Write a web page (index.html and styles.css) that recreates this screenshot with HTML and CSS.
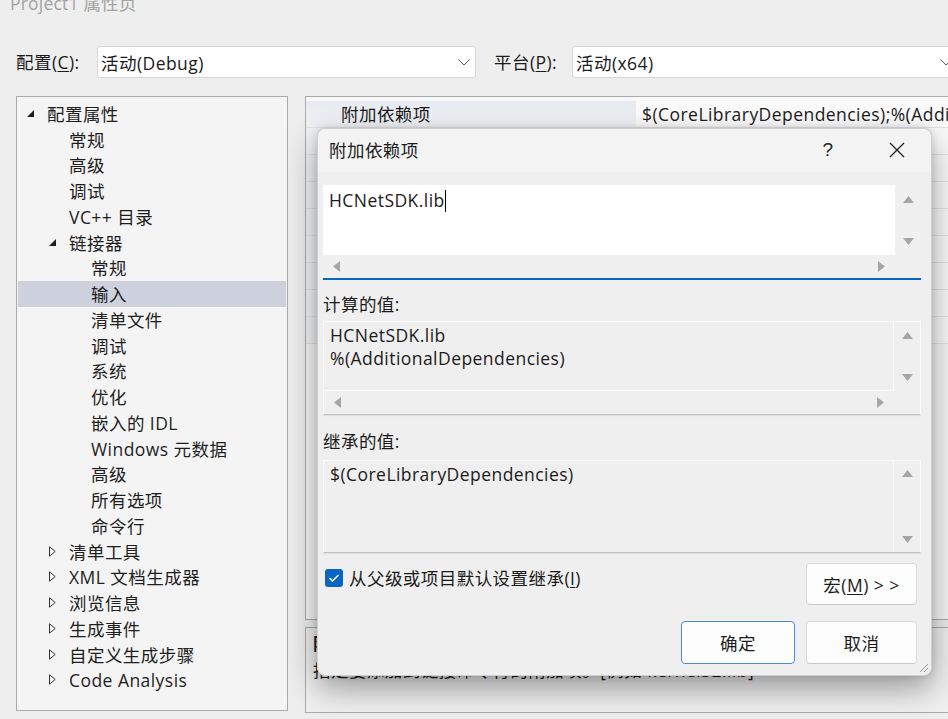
FILE: index.html
```html
<!DOCTYPE html>
<html lang="zh-CN">
<head>
<meta charset="utf-8">
<title>Project1 属性页</title>
<link rel="stylesheet" href="styles.css">
</head>
<body>
<div class="titlebar">Project1 属性页</div>

<div class="config-row">
  <span class="lbl lbl-config">配置(<u>C</u>):</span>
  <div class="combo combo-config">
    <span>活动(Debug)</span>
    <svg class="chev" width="12" height="7" viewBox="0 0 12 7"><path d="M0.5 0.5L6 6L11.5 0.5" fill="none" stroke="#555" stroke-width="1"/></svg>
  </div>
  <span class="lbl lbl-platform">平台(<u>P</u>):</span>
  <div class="combo combo-platform">
    <span>活动(x64)</span>
    <svg class="chev" width="12" height="7" viewBox="0 0 12 7"><path d="M0.5 0.5L6 6L11.5 0.5" fill="none" stroke="#555" stroke-width="1"/></svg>
  </div>
</div>

<div class="main">
  <div class="tree">
    <div class="node l0"><span class="exp"><svg width="7" height="7" viewBox="0 0 7 7"><path d="M7 0V7H0Z" fill="#1e1e1e"/></svg></span>配置属性</div>
    <div class="node l1"><span class="exp"></span>常规</div>
    <div class="node l1"><span class="exp"></span>高级</div>
    <div class="node l1"><span class="exp"></span>调试</div>
    <div class="node l1"><span class="exp"></span>VC++ 目录</div>
    <div class="node l1"><span class="exp"><svg width="7" height="7" viewBox="0 0 7 7"><path d="M7 0V7H0Z" fill="#1e1e1e"/></svg></span>链接器</div>
    <div class="node l2"><span class="exp"></span>常规</div>
    <div class="node l2 selected"><span class="exp"></span>输入</div>
    <div class="node l2"><span class="exp"></span>清单文件</div>
    <div class="node l2"><span class="exp"></span>调试</div>
    <div class="node l2"><span class="exp"></span>系统</div>
    <div class="node l2"><span class="exp"></span>优化</div>
    <div class="node l2"><span class="exp"></span>嵌入的 IDL</div>
    <div class="node l2"><span class="exp"></span>Windows 元数据</div>
    <div class="node l2"><span class="exp"></span>高级</div>
    <div class="node l2"><span class="exp"></span>所有选项</div>
    <div class="node l2"><span class="exp"></span>命令行</div>
    <div class="node l1"><span class="exp"><svg width="7" height="11" viewBox="0 0 7 11"><path d="M0.5 0.8L6.2 5.5L0.5 10.2Z" fill="none" stroke="#333" stroke-width="1"/></svg></span>清单工具</div>
    <div class="node l1"><span class="exp"><svg width="7" height="11" viewBox="0 0 7 11"><path d="M0.5 0.8L6.2 5.5L0.5 10.2Z" fill="none" stroke="#333" stroke-width="1"/></svg></span>XML 文档生成器</div>
    <div class="node l1"><span class="exp"><svg width="7" height="11" viewBox="0 0 7 11"><path d="M0.5 0.8L6.2 5.5L0.5 10.2Z" fill="none" stroke="#333" stroke-width="1"/></svg></span>浏览信息</div>
    <div class="node l1"><span class="exp"><svg width="7" height="11" viewBox="0 0 7 11"><path d="M0.5 0.8L6.2 5.5L0.5 10.2Z" fill="none" stroke="#333" stroke-width="1"/></svg></span>生成事件</div>
    <div class="node l1"><span class="exp"><svg width="7" height="11" viewBox="0 0 7 11"><path d="M0.5 0.8L6.2 5.5L0.5 10.2Z" fill="none" stroke="#333" stroke-width="1"/></svg></span>自定义生成步骤</div>
    <div class="node l1"><span class="exp"><svg width="7" height="11" viewBox="0 0 7 11"><path d="M0.5 0.8L6.2 5.5L0.5 10.2Z" fill="none" stroke="#333" stroke-width="1"/></svg></span>Code Analysis</div>
  </div>

  <div class="right">
    <div class="grid">
      <div class="prow sel"><div class="pname">附加依赖项</div><div class="pval">$(CoreLibraryDependencies);%(AdditionalDependencies)</div></div>
      <div class="prow"><div class="pname"></div><div class="pval"></div></div>
      <div class="prow"><div class="pname"></div><div class="pval"></div></div>
      <div class="prow"><div class="pname"></div><div class="pval"></div></div>
      <div class="prow"><div class="pname"></div><div class="pval"></div></div>
      <div class="prow"><div class="pname"></div><div class="pval"></div></div>
      <div class="prow"><div class="pname"></div><div class="pval"></div></div>
      <div class="prow"><div class="pname"></div><div class="pval"></div></div>
      <div class="prow"><div class="pname"></div><div class="pval"></div></div>
    </div>
    <div class="desc">
      <div class="desc-title">附加依赖项</div>
      <div class="desc-text">指定要添加到链接命令行的附加项。[例如 kernel32.lib]</div>
    </div>
  </div>
</div>

<div class="dialog">
  <div class="dlg-head">
    <span class="dlg-title">附加依赖项</span>
    <span class="dlg-btn dlg-help">?</span>
    <span class="dlg-btn dlg-close"><svg width="16" height="16" viewBox="0 0 16 16"><path d="M1 1L15 15M15 1L1 15" stroke="#222" stroke-width="1.3" fill="none"/></svg></span>
  </div>
  <div class="dlg-body">
    <div class="editbox">
      <div class="edit-area"><span>HCNetSDK.lib</span><span class="caret"></span></div>
      <div class="vscroll">
        <svg width="11" height="7" viewBox="0 0 11 7"><path d="M5.5 0L11 7H0Z" fill="#a6a6a6"/></svg>
        <svg width="11" height="7" viewBox="0 0 11 7"><path d="M0 0H11L5.5 7Z" fill="#a6a6a6"/></svg>
      </div>
      <div class="hscroll">
        <svg width="7" height="11" viewBox="0 0 7 11"><path d="M7 0V11L0 5.5Z" fill="#a6a6a6"/></svg>
        <svg width="7" height="11" viewBox="0 0 7 11"><path d="M0 0L7 5.5L0 11Z" fill="#a6a6a6"/></svg>
      </div>
    </div>

    <div class="sec-label sec-computed">计算的值:</div>
    <div class="valbox valbox-computed">
      <div class="val-area"><div>HCNetSDK.lib</div><div>%(AdditionalDependencies)</div></div>
      <div class="vscroll">
        <svg width="11" height="7" viewBox="0 0 11 7"><path d="M5.5 0L11 7H0Z" fill="#a6a6a6"/></svg>
        <svg width="11" height="7" viewBox="0 0 11 7"><path d="M0 0H11L5.5 7Z" fill="#a6a6a6"/></svg>
      </div>
      <div class="hscroll">
        <svg width="7" height="11" viewBox="0 0 7 11"><path d="M7 0V11L0 5.5Z" fill="#a6a6a6"/></svg>
        <svg width="7" height="11" viewBox="0 0 7 11"><path d="M0 0L7 5.5L0 11Z" fill="#a6a6a6"/></svg>
      </div>
    </div>

    <div class="sec-label sec-inherited">继承的值:</div>
    <div class="valbox valbox-inherited">
      <div class="val-area"><div>$(CoreLibraryDependencies)</div></div>
      <div class="vscroll vscroll-tall">
        <svg width="11" height="7" viewBox="0 0 11 7"><path d="M5.5 0L11 7H0Z" fill="#a6a6a6"/></svg>
        <svg width="11" height="7" viewBox="0 0 11 7"><path d="M0 0H11L5.5 7Z" fill="#a6a6a6"/></svg>
      </div>
    </div>

    <div class="dlg-foot">
      <label class="check">
        <span class="box"><svg width="12" height="10" viewBox="0 0 12 10"><path d="M1.5 5L4.5 8L10.5 2" fill="none" stroke="#fff" stroke-width="1.5"/></svg></span>
        <span>从父级或项目默认设置继承(<u>I</u>)</span>
      </label>
      <button class="btn btn-macro">宏(<u>M</u>) &gt; &gt;</button>
    </div>
    <div class="dlg-actions">
      <button class="btn btn-ok">确定</button>
      <button class="btn">取消</button>
    </div>
  </div>
  <svg class="grip" width="12" height="12" viewBox="0 0 12 12"><path d="M11 3L3 11M11 7L7 11" stroke="#9a9a9a" stroke-width="1" fill="none"/></svg>
</div>
</body>
</html>
```

FILE: styles.css
```css
* { box-sizing: border-box; }

html, body {
  margin: 0;
  padding: 0;
}

body {
  width: 948px;
  height: 719px;
  overflow: hidden;
  position: relative;
  background: #eeeeee;
  font-family: "Open Sans", "Noto Sans CJK SC", sans-serif;
  font-size: 17.5px;
  letter-spacing: 0.45px;
  color: #1b1b1b;
}

u { text-decoration: underline; text-underline-offset: 2px; }

.titlebar {
  margin-top: -7px;
  height: 20px;
  line-height: 20px;
  padding-left: 10px;
  color: #a3a3a3;
  letter-spacing: 0.2px;
  white-space: nowrap;
}

.config-row {
  margin-top: 33px;
  height: 32px;
  display: flex;
  align-items: center;
  padding-left: 16px;
  white-space: nowrap;
}

.lbl { display: block; line-height: 32px; flex-shrink: 0; }
.lbl-config { width: 81px; }
.lbl-platform { width: 78px; margin-left: 18px; }

.combo {
  height: 32px;
  background: #ffffff;
  border: 1px solid #d6d6d6;
  border-radius: 3px;
  display: flex;
  align-items: center;
  justify-content: space-between;
  padding: 0 5px 0 3px;
  flex-shrink: 0;
}
.combo-config { width: 379px; }
.combo-platform { width: 386px; }
.chev { display: block; }

.main {
  margin-top: 18px;
  display: flex;
  padding-left: 16px;
  gap: 17px;
}

.tree {
  width: 272px;
  height: 615px;
  flex-shrink: 0;
  background: #f4f4f4;
  border: 1px solid #ababab;
  padding-top: 3.5px;
}

.node {
  height: 25.75px;
  display: flex;
  align-items: center;
  margin: 0 1px;
  white-space: nowrap;
  color: #1e1e1e;
}
.node.l0 { padding-left: 9px; }
.node.l1 { padding-left: 31px; }
.node.l2 { padding-left: 53px; }
.node.selected { background: #cdd0dd; }

.exp {
  width: 20px;
  flex-shrink: 0;
  display: flex;
  align-items: center;
}
.exp svg { display: block; }

.right {
  width: 660px;
  flex-shrink: 0;
  display: flex;
  flex-direction: column;
  gap: 7px;
}

.grid {
  height: 524px;
  background: #f8f8f8;
  border: 1px solid #ababab;
  padding-top: 4px;
}

.prow {
  display: flex;
  height: 27px;
  border-bottom: 1px solid #e4e4e4;
}
.pname {
  width: 330px;
  flex-shrink: 0;
  padding-left: 35px;
  line-height: 27px;
  background: #f2f3f5;
  white-space: nowrap;
}
.pval {
  flex: 1;
  padding-left: 6px;
  line-height: 27px;
  white-space: nowrap;
  overflow: hidden;
  background: #fbfbfb;
}
.prow.sel .pname { background: linear-gradient(#e7eaf0, #f1f3f7); }

.desc {
  height: 86px;
  background: #f0f0f0;
  border: 1px solid #ababab;
  padding: 3px 7px 0;
}
.desc-title { line-height: 24px; font-weight: bold; }
.desc-text { line-height: 24px; margin-top: 3px; white-space: nowrap; }

/* dialog */
.dialog {
  position: absolute;
  left: 317px;
  top: 128px;
  width: 615px;
  height: 548px;
  background: #efefef;
  border: 1px solid #cfcfcf;
  border-radius: 8px;
  box-shadow: 0 12px 32px rgba(0, 0, 0, 0.38), 0 0 6px rgba(0, 0, 0, 0.12);
  display: flex;
  flex-direction: column;
}

.dlg-head {
  height: 43px;
  flex-shrink: 0;
  display: flex;
  align-items: center;
  padding: 0 11px 2px 11px;
  background: #f3f3f3;
  border-radius: 8px 8px 0 0;
}
.dlg-title { flex: 1; }
.dlg-btn {
  width: 46px;
  height: 40px;
  display: flex;
  align-items: center;
  justify-content: center;
}
.dlg-help {
  margin-right: 23px;
  font-family: "Liberation Sans", sans-serif;
  font-size: 19px;
  color: #222;
}
.dlg-close svg { display: block; }

.dlg-body {
  padding: 13px 10px 0 5px;
  display: flex;
  flex-direction: column;
}

.editbox {
  height: 95px;
  display: grid;
  grid-template-columns: 1fr 26px;
  grid-template-rows: 70px 23px;
  background: #f0f0f0;
  border-bottom: 2px solid #0a66c2;
}
.edit-area {
  background: #ffffff;
  padding: 3px 6px 0;
  line-height: 24px;
  display: flex;
  align-items: flex-start;
}
.caret {
  display: inline-block;
  width: 1px;
  height: 22px;
  margin-top: 2px;
  background: #000;
}

.vscroll {
  display: flex;
  flex-direction: column;
  justify-content: space-between;
  align-items: center;
  padding: 10.5px 0;
}
.vscroll svg, .hscroll svg { display: block; }

.hscroll {
  display: flex;
  justify-content: space-between;
  align-items: center;
  padding: 0 10px;
}

.sec-label {
  line-height: 24px;
  white-space: nowrap;
}
.sec-computed { margin-top: 12px; }
.sec-inherited { margin-top: 14px; }

.valbox {
  margin-top: 5px;
  display: grid;
  grid-template-columns: 1fr 26px;
  background: #efefef;
  border: 1px solid #fafafa;
  border-bottom: 1px solid #c2c2c2;
  box-shadow: 0 1px 1px rgba(0, 0, 0, 0.06);
}
.valbox-computed { height: 94px; grid-template-rows: 69px 23px; }
.valbox-inherited { height: 93px; grid-template-rows: 91px; margin-top: 7px; }

.val-area {
  padding: 2px 6px 0;
  line-height: 23px;
  border-right: 1px solid #fafafa;
  white-space: nowrap;
}
.valbox-computed .val-area { border-bottom: 1px solid #fafafa; }
.valbox .vscroll { padding: 10px 0; }
.valbox .vscroll-tall { padding: 9px 0 9px; }

.dlg-foot {
  margin-top: 10px;
  height: 42px;
  display: flex;
  justify-content: space-between;
  align-items: flex-start;
  padding-right: 4px;
}

.check {
  display: flex;
  align-items: center;
  gap: 6px;
  margin-top: 5px;
  margin-left: 2px;
  line-height: 20px;
  white-space: nowrap;
}
.check .box {
  width: 18px;
  height: 18px;
  border-radius: 3px;
  background: #0a66c2;
  display: flex;
  align-items: center;
  justify-content: center;
}
.check .box svg { display: block; }

.btn {
  font: inherit;
  letter-spacing: inherit;
  color: #1b1b1b;
  background: #fdfdfd;
  border: 1px solid #d9d9d9;
  border-bottom-color: #c9c9c9;
  border-radius: 4px;
  width: 111px;
  height: 42px;
  padding: 0;
}

.dlg-actions {
  margin-top: 16px;
  display: flex;
  justify-content: flex-end;
  gap: 11px;
  padding-right: 4px;
}
.dlg-actions .btn { height: 43px; }
.btn-ok {
  width: 114px !important;
  border: 1px solid #4a8ad4;
}

.grip {
  position: absolute;
  right: 2px;
  bottom: 2px;
}
```
